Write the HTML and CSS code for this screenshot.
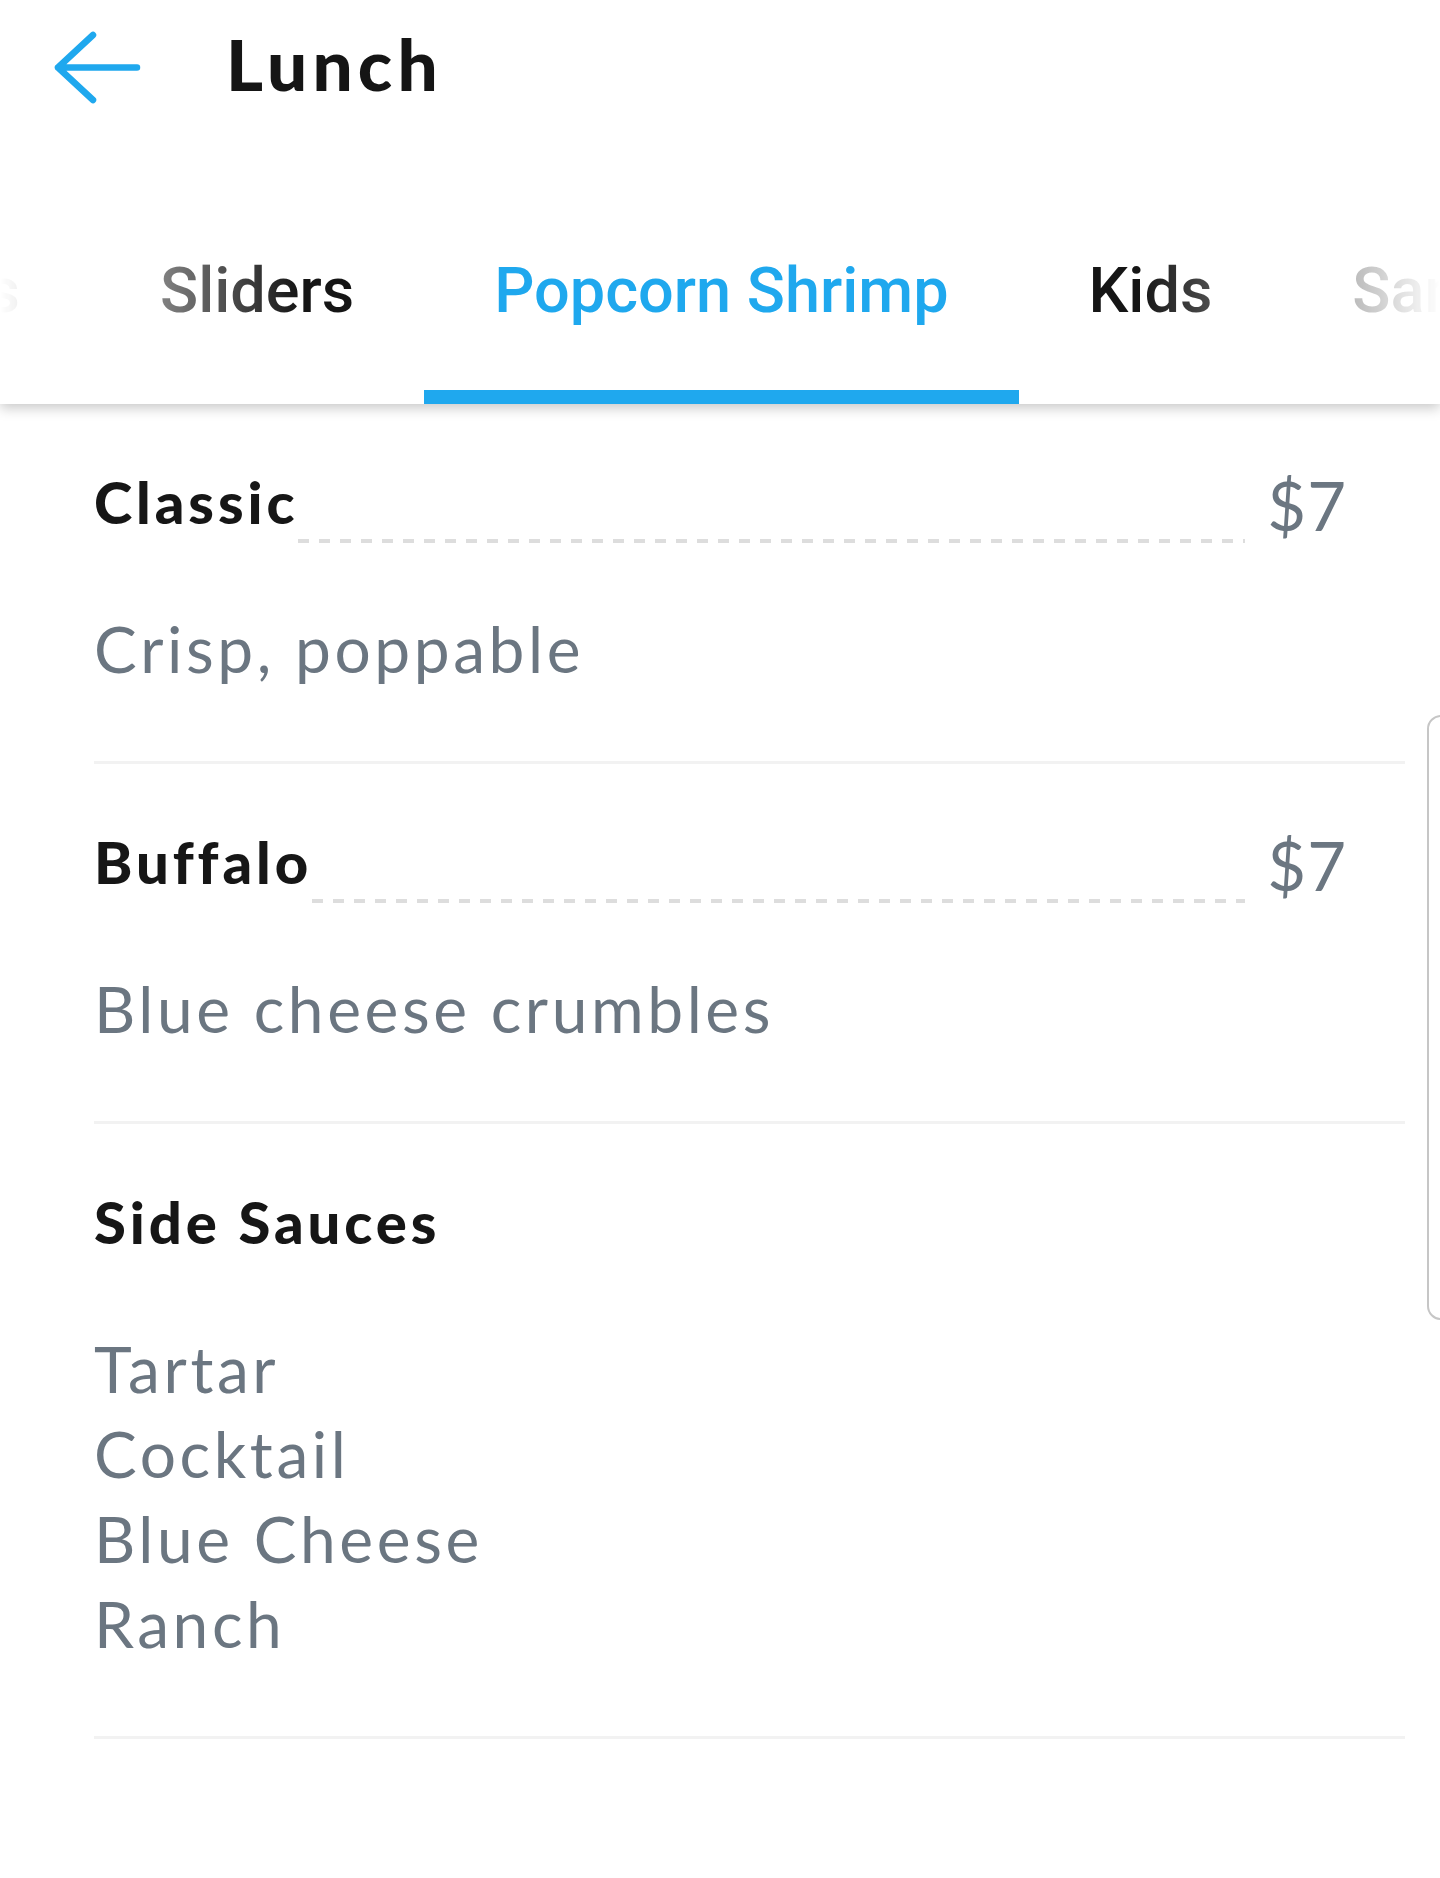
FILE: index.html
```html
<!DOCTYPE html>
<html lang="en">
<head>
<meta charset="utf-8">
<title>Lunch</title>
<link rel="stylesheet" href="styles.css">
</head>
<body>
<div class="appbar">
  <header class="header">
    <svg class="back" width="100" height="80" viewBox="0 0 100 80" aria-hidden="true">
      <path d="M45 7 L10 39.5 L45 72 M10 39.5 L89 39.5" fill="none" stroke="#1fa8ee" stroke-width="6.5" stroke-linecap="round" stroke-linejoin="round"/>
    </svg>
    <h1 class="title">Lunch</h1>
  </header>
  <nav class="tabs">
    <div class="tab tab-partial"><span class="tab-label">Wings</span></div>
    <div class="tab"><span class="tab-label">Sliders</span></div>
    <div class="tab tab-active"><span class="tab-label">Popcorn Shrimp</span></div>
    <div class="tab"><span class="tab-label">Kids</span></div>
    <div class="tab"><span class="tab-label">Sandwiches</span></div>
  </nav>
</div>

<main class="menu">
  <section class="item">
    <div class="item-head">
      <span class="item-name">Classic</span>
      <span class="leader"></span>
      <span class="item-price">$7</span>
    </div>
    <div class="item-desc">Crisp, poppable</div>
  </section>
  <section class="item">
    <div class="item-head">
      <span class="item-name">Buffalo</span>
      <span class="leader"></span>
      <span class="item-price">$7</span>
    </div>
    <div class="item-desc">Blue cheese crumbles</div>
  </section>
  <section class="item">
    <div class="item-head">
      <span class="item-name">Side Sauces</span>
    </div>
    <div class="item-desc">Tartar<br>Cocktail<br>Blue Cheese<br>Ranch</div>
  </section>
</main>

<div class="scroll-thumb"></div>
</body>
</html>
```

FILE: styles.css
```css
* { box-sizing: border-box; }

html, body {
  margin: 0;
  padding: 0;
  background: #ffffff;
}

body {
  width: 1440px;
  min-height: 1878px;
  overflow: hidden;
  position: relative;
  font-family: "Lato", "Noto Sans", sans-serif;
  color: #161616;
}

.appbar {
  position: relative;
  z-index: 2;
  background: #ffffff;
  box-shadow: 0 4px 12px rgba(0, 0, 0, 0.22);
}

.header {
  height: 136px;
  display: flex;
  align-items: flex-start;
}

.back {
  display: block;
  margin: 28px 0 0 48px;
  flex-shrink: 0;
}

.title {
  margin: 24px 0 0 78px;
  font-family: "Lato", sans-serif;
  font-weight: 900;
  font-size: 71px;
  line-height: 80px;
  letter-spacing: 5.2px;
  color: #151515;
}

.tabs {
  display: flex;
  height: 268px;
  overflow: hidden;
  -webkit-mask-image: linear-gradient(to right, transparent 0, #000 300px, #000 calc(100% - 300px), transparent 100%);
  mask-image: linear-gradient(to right, transparent 0, #000 300px, #000 calc(100% - 300px), transparent 100%);
}

.tab {
  flex-shrink: 0;
  display: flex;
  padding: 123px 70px 67px;
  border-bottom: 14px solid transparent;
  font-family: "Roboto", sans-serif;
  font-weight: 500;
  font-size: 63px;
  line-height: 64px;
  color: #151515;
  white-space: nowrap;
}

.tab-partial {
  width: 90px;
  padding-left: 0;
  justify-content: flex-end;
  overflow: hidden;
}

.tab-active {
  color: #1fa8ee;
  border-bottom-color: #1fa8ee;
}

.menu {
  display: flex;
  flex-direction: column;
}

.item {
  margin: 0 35px 0 94px;
  padding: 63px 58px 70px 0;
  border-bottom: 3px solid #f2f2f2;
}

.item-head {
  display: flex;
  align-items: flex-start;
  min-height: 76px;
}

.item-name {
  font-weight: 900;
  font-size: 58px;
  line-height: 70px;
  letter-spacing: 3.9px;
  color: #161616;
  white-space: nowrap;
}

.leader {
  flex: 1;
  height: 4px;
  margin: 72px 22px 0 0;
  background: repeating-linear-gradient(to right, #dddddd 0, #dddddd 11px, transparent 11px, transparent 21px);
}

.item-price {
  margin-top: 3px;
  font-weight: 400;
  font-size: 67px;
  line-height: 70px;
  letter-spacing: 1px;
  color: #6b7681;
  white-space: nowrap;
}

.item-desc {
  margin-top: 63px;
  font-weight: 400;
  font-size: 64px;
  line-height: 85px;
  letter-spacing: 3.6px;
  color: #6b7681;
}

.scroll-thumb {
  position: absolute;
  left: 1427px;
  top: 715px;
  width: 40px;
  height: 605px;
  border: 2px solid #c6c6c6;
  border-radius: 14px;
  background: #ffffff;
}
```
